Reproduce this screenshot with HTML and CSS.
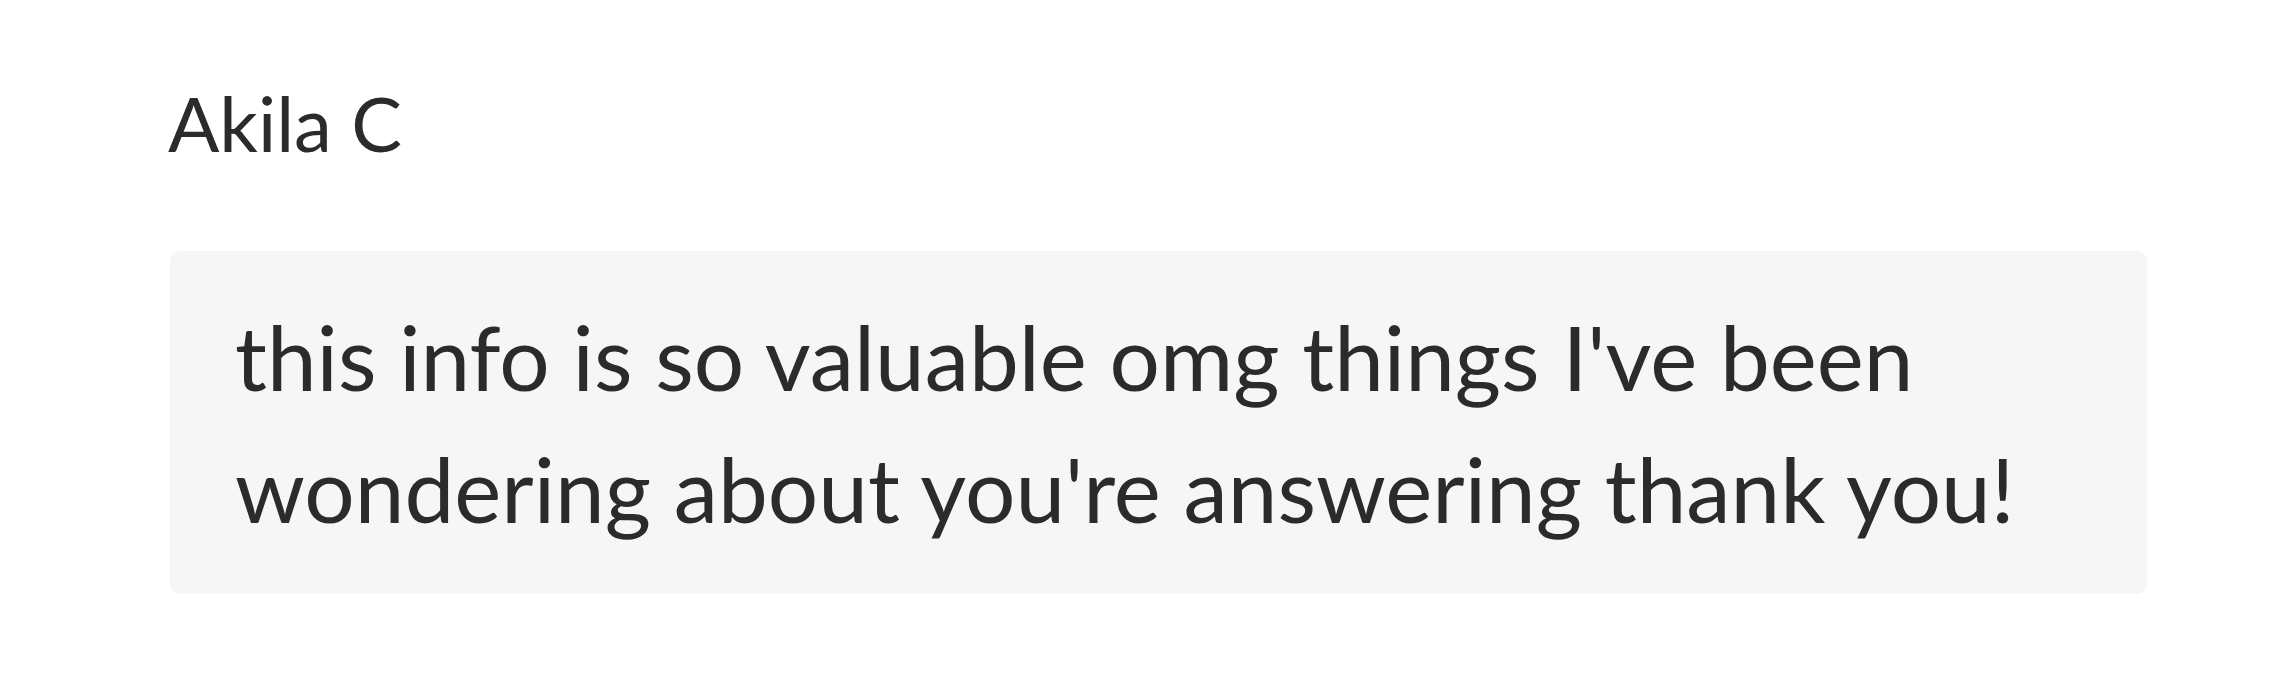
FILE: index.html
```html
<!DOCTYPE html>
<html>
<head>
<meta charset="utf-8">
<link rel="stylesheet" href="styles.css">
</head>
<body>
<div class="comment">
  <div class="author">Akila C</div>
  <div class="bubble">this info is so valuable omg things I've been wondering about you're answering thank you!</div>
</div>
</body>
</html>
```
FILE: styles.css
```css
html, body {
  margin: 0;
  padding: 0;
  background: #ffffff;
}
body {
  font-family: Lato, "Noto Sans", sans-serif;
  color: #2b2b2b;
}
.comment {
  padding: 77px 148px 0 170px;
  display: flex;
  flex-direction: column;
}
.author {
  font-size: 76px;
  line-height: 91px;
  margin-left: -2px;
  margin-bottom: 83px;
}
.bubble {
  width: 1977px;
  box-sizing: border-box;
  background: #f6f6f6;
  border-radius: 10px;
  padding: 40px 40px 39px 65px;
  font-size: 89px;
  line-height: 132px;
}
```
